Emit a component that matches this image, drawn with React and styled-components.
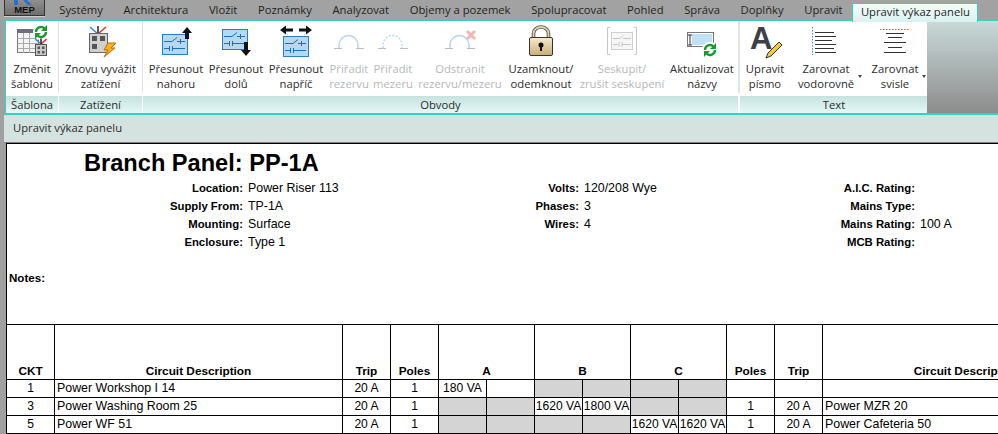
import React from 'react'
import styled, { createGlobalStyle } from 'styled-components'

const uiFont = `'Open Sans', 'Noto Sans', sans-serif`
const docFont = `'Liberation Sans', Arial, sans-serif`

const GlobalStyle = createGlobalStyle`
  html, body {
    margin: 0;
    padding: 0;
    background: #a0a0a0;
  }
`
const Page = styled.div`
  width: 998px;
  height: 434px;
  overflow: hidden;
  display: flex;
  flex-direction: column;
  background: #a0a0a0;
  font-family: ${uiFont};
  font-size: 11.25px;
  color: #2b2b2b;
`
const TabBar = styled.div`
  height: 20px;
  display: flex;
  flex: none;
  align-items: stretch;
  padding-left: 4px;
  background: #a2a2a2;
  position: relative;
  z-index: 1;
`
const AppButton = styled.div`
  width: 41px;
  height: 16px;
  margin-right: 4px;
  position: relative;
  box-sizing: border-box;
  border: 1px solid #333;
  border-top: none;
  background: linear-gradient(#8f8f8f, #6f6f6f);
  color: #111;
  font-family: ${docFont};
  font-weight: bold;
  font-size: 9.5px;
  line-height: 10px;
  padding-top: 5px;
  text-align: center;
  box-shadow: 0 1px 0 #d0d0d0;
`
const LogoMark = styled.svg`
  position: absolute;
  left: 6px;
  top: 0;
`
const Tab = styled.div`
  padding: 0 10.3px;
  line-height: 20px;
  white-space: nowrap;
  color: #1f1f1f;
`
const ActiveTab = styled(Tab)`
  box-sizing: border-box;
  width: 126px;
  height: 19px;
  margin: 3px 0 0 -1px;
  padding: 0 8px;
  line-height: 15px;
  border: 1px solid #35d0c0;
  border-bottom: none;
  background: linear-gradient(#f4fbfa, #d9f3f0);
`
const Ribbon = styled.div`
  height: 95px;
  flex: none;
  display: flex;
  box-sizing: border-box;
  margin-left: 5px;
  border-top: 1px solid #35d0c0;
  border-bottom: 2px solid #35d0c0;
  border-left: 1px solid #35d0c0;
  background: linear-gradient(#dfe5e5 78%, #fff 78%);
`
const Group = styled.div`
  width: ${props => props.$w}px;
  margin-right: ${props => props.$gap ?? 1}px;
  display: flex;
  flex-direction: column;
  flex: none;
  background: #fff;
`
const GroupBody = styled.div`
  flex: 1;
  display: flex;
  padding-left: ${props => props.$inset ?? 0}px;
`
const GroupName = styled.div`
  height: 17px;
  line-height: 17px;
  text-align: center;
  background: linear-gradient(#c6e2df, #e4f9f7);
  color: #2b2b2b;
`
const Filler = styled.div`
  flex: 1;
  margin-left: -1px;
  background: linear-gradient(#cad9d9, #8c8c8c);
`
const ToolButton = styled.div`
  width: ${props => props.$w}px;
  flex: none;
  position: relative;
  padding-top: 3px;
  display: flex;
  flex-direction: column;
  align-items: center;
  color: ${props => (props.$off ? '#b5b8b8' : '#2b2b2b')};
`
const IconSlot = styled.svg`
  width: 40px;
  height: 36px;
  flex: none;
  overflow: visible;
`
const ToolLabel = styled.div`
  margin-top: 1px;
  line-height: 15px;
  text-align: center;
  white-space: nowrap;
`
const Caret = styled.span`
  position: absolute;
  right: ${props => props.$right}px;
  top: 54px;
  border: 2.5px solid transparent;
  border-top: 3px solid #444;
`
const ContextBar = styled.div`
  height: 28px;
  flex: none;
  margin-left: 4px;
  padding-left: 9px;
  line-height: 26px;
  background: #d5e3e0;
  border-bottom: 1px solid #7c7c7c;
  box-sizing: border-box;
`
const Sheet = styled.div`
  flex: 1;
  margin-left: 6px;
  background: #fff;
  border-top: 1px solid #000;
  border-left: 1px solid #000;
  overflow: hidden;
  font-family: ${docFont};
  font-size: 12.3px;
  color: #000;
`
const SheetTitle = styled.h1`
  margin: 0 0 2px;
  padding: 5px 0 0 77px;
  font-size: 23.6px;
  line-height: 28px;
  font-weight: bold;
`
const InfoGrid = styled.div`
  display: grid;
  grid-template-columns: 236px 126px 200px 126px 200px 1fr;
  grid-auto-rows: 18px;
  column-gap: 5px;
  line-height: 18px;
`
const InfoLabel = styled.div`
  font-weight: bold;
  font-size: 11.35px;
  text-align: right;
`
const InfoValue = styled.div`
  white-space: nowrap;
  font-size: 12.4px;
`
const Notes = styled.div`
  font-weight: bold;
  font-size: 11.6px;
  padding-left: 2px;
  margin-top: 18px;
  height: 55px;
  line-height: 18px;
`
const Schedule = styled.table`
  table-layout: fixed;
  width: 1104px;
  border-spacing: 0;
  border-top: 1px solid #000;
`
const HeadCell = styled.th`
  height: 53px;
  padding: 0 0 1px;
  vertical-align: bottom;
  font-size: 11.8px;
  line-height: 14px;
  border-right: 1px solid #000;
  border-bottom: 1px solid #000;
`
const Cell = styled.td`
  height: 17px;
  padding: 0 ${props => (props.$left ? '0 0 2px' : '0')};
  text-align: ${props => (props.$left ? 'left' : 'center')};
  font-size: 12.1px;
  line-height: 17px;
  white-space: nowrap;
  overflow: hidden;
  background: ${props => (props.$shade ? '#d4d4d4' : '#fff')};
  border-right: 1px solid #000;
  border-bottom: 1px solid #000;
`
const DescCell = styled(Cell)`
  font-size: 12.4px;
`

const Refresh = ({ cx, cy }) => (
  <g fill="none" stroke="#1d9a2c" strokeWidth="2.4">
    <path d={`M${cx - 5} ${cy}a5 5 0 0 1 8.500-3.500`} />
    <path d={`M${cx + 5} ${cy}a5 5 0 0 1-8.500 3.500`} />
    <path d={`M${cx + 6} ${cy - 7}v6h-6z`} fill="#1d9a2c" stroke="none" />
    <path d={`M${cx - 6} ${cy + 7}v-6h6z`} fill="#1d9a2c" stroke="none" />
  </g>
)

const Wires = ({ x, y, s = 1 }) => (
  <g strokeWidth="1.6" fill="none">
    <path d={`M${x - 8 * s} ${y - 7 * s}L${x} ${y}`} stroke="#2f8fe0" />
    <path d={`M${x + 8 * s} ${y - 7 * s}L${x} ${y}`} stroke="#e0342c" />
    <path d={`M${x} ${y - 8 * s}V${y}`} stroke="#333" />
  </g>
)

const Cells = ({ x, y, w, h }) => (
  <g>
    <rect x={x} y={y} width={w} height={h} fill="#c9c9c9" stroke="#555" />
    <rect x={x + 2} y={y + 2} width={w / 2 - 3} height={h / 2 - 3} fill="#555" />
    <rect x={x + w / 2 + 1} y={y + 2} width={w / 2 - 3} height={h / 2 - 3} fill="#555" />
    <rect x={x + 2} y={y + h / 2 + 1} width={w / 2 - 3} height={h / 2 - 3} fill="#555" />
    <rect x={x + w / 2 + 1} y={y + h / 2 + 1} width={w / 2 - 3} height={h / 2 - 3} fill="#555" />
  </g>
)

const TemplateIcon = () => (
  <IconSlot viewBox="0 0 40 36">
    <rect x="5.5" y="5.5" width="21" height="23" fill="#f4f4f4" stroke="#777" />
    <rect x="5" y="5" width="22" height="4" fill="#6b7078" />
    <path d="M5.5 14.5h21M5.5 19.5h21M5.5 24.5h21M11.5 9v20M17.5 9v20" stroke="#aaa" />
    <circle cx="29" cy="8" r="8" fill="#fff" />
    <Refresh cx={29} cy={8} />
    <Wires x={29} y={20} s={0.7} />
    <Cells x={23.5} y={20.5} w={11} h={11} />
  </IconSlot>
)

const BalanceIcon = () => (
  <IconSlot viewBox="0 0 40 36">
    <Wires x={17} y={10} />
    <rect x="8.5" y="9.5" width="18" height="19" fill="#d0d0d0" stroke="#666" />
    <rect x="11" y="12" width="5" height="5" fill="#555" />
    <rect x="19" y="12" width="5" height="5" fill="#555" />
    <rect x="11" y="20" width="5" height="5" fill="#555" />
    <path d="M27 19l8 0-5 5h4l-11 9 4-7h-4z" fill="#f6b21c" stroke="#c66a10" strokeWidth="1" />
  </IconSlot>
)

const CircuitPanel = ({ x, y, w = 25, h = 20 }) => (
  <g>
    <rect x={x + 0.5} y={y + 0.5} width={w} height={h} fill="#b6d8f2" stroke="#2a7cc6" />
    <g stroke="#1f6fb8" fill="none">
      <path d={`M${x + 2} ${y + 7.5}h8l5-4M${x + 15} ${y + 7.5}h8M${x + 18.5} ${y + 5}v5`} />
      <path d={`M${x + 2} ${y + 14.5}h5M${x + 7.5} ${y + 12}v5M${x + 10.5} ${y + 12}v5M${x + 11} ${y + 14.5}h12`} />
    </g>
  </g>
)

const MoveUpIcon = () => (
  <IconSlot viewBox="0 0 40 36">
    <CircuitPanel x={6} y={10} />
    <path d="M31 3l5 6h-3v6h-4V9h-3z" fill="#111" />
  </IconSlot>
)

const MoveDownIcon = () => (
  <IconSlot viewBox="0 0 40 36">
    <CircuitPanel x={6} y={5} />
    <path d="M30 32l-5-6h3v-8h4v8h3z" fill="#111" />
  </IconSlot>
)

const MoveAcrossIcon = () => (
  <IconSlot viewBox="0 0 40 36">
    <CircuitPanel x={7} y={12} />
    <path d="M4 6l6-4.500v3h7v3h-7v3zM36 6l-6-4.500v3h-7v3h7v3z" fill="#111" />
  </IconSlot>
)

const ArcIcon = ({ dashed, cross }) => (
  <IconSlot viewBox="0 0 40 36">
    <path d="M5 24.500h8M27 24.500h8" stroke="#bdbdbd" fill="none" />
    <path
      d="M10 24v-3a9.500 9.500 0 0 1 19 0v3"
      stroke="#b9d4ee"
      strokeWidth="1.4"
      strokeDasharray={dashed ? '2 1.500' : undefined}
      fill="none"
    />
    {cross && <path d="M27 7l8 8M35 7l-8 8" stroke="#f2b4b4" strokeWidth="3" />}
  </IconSlot>
)

const LockIcon = () => (
  <IconSlot viewBox="0 0 40 36">
    <path d="M12.500 14V9.500a7.500 6.500 0 0 1 15 0V14" fill="none" stroke="#555" strokeWidth="3.600" />
    <path d="M12.500 14V9.500a7.500 6.500 0 0 1 15 0V14" fill="none" stroke="#e4d3a6" strokeWidth="1.800" />
    <defs>
      <linearGradient id="lockBody" x1="0" y1="0" x2="0" y2="1">
        <stop offset="0" stopColor="#f8eccd" />
        <stop offset="1" stopColor="#c9ad76" />
      </linearGradient>
    </defs>
    <rect x="8.500" y="13.500" width="23" height="18" rx="1.500" fill="url(#lockBody)" stroke="#333" />
    <circle cx="20" cy="21" r="2.500" fill="#111" />
    <rect x="19" y="21" width="2" height="6" fill="#111" />
  </IconSlot>
)

const GroupIcon = () => (
  <IconSlot viewBox="0 0 40 36">
    <path d="M8 3.500H5.500v27H8M32 3.500h2.500v27H32" fill="none" stroke="#c6c6c6" />
    <rect x="9.500" y="8.500" width="21" height="17" fill="#f6f6f6" stroke="#cfcfcf" />
    <path d="M11 14.500h7l3-3M21 14.500h8M11 20.500h5M17 18v5M20 18v5M20 20.500h9" stroke="#c6c6c6" fill="none" />
  </IconSlot>
)

const RenameIcon = () => (
  <IconSlot viewBox="0 0 40 36">
    <rect x="5.500" y="8.500" width="26" height="14" fill="#fff" stroke="#777" />
    <rect x="10" y="10" width="20" height="11" fill="#bfe0f7" />
    <path d="M6 11h4M6 21h4M8 11v10" stroke="#333" fill="none" />
    <circle cx="28" cy="26" r="8" fill="#fff" />
    <Refresh cx={28} cy={26} />
  </IconSlot>
)

const FontIcon = () => (
  <IconSlot viewBox="0 0 40 36">
    <text x="5" y="25" fontFamily={docFont} fontWeight="bold" fontSize="31" fill="#3a4048">A</text>
    <path d="M34 18l3 3-11 11-5 2 2-5z" fill="#f6c93c" stroke="#333" />
  </IconSlot>
)

const AlignHIcon = () => (
  <IconSlot viewBox="0 0 40 36">
    <path d="M6.500 3v28" stroke="#2f8fe0" strokeDasharray="1.500 1.500" />
    <path d="M9 8.500h19M9 12.500h21M9 16.500h17M9 20.500h21M9 24.500h19M9 28.500h21" stroke="#333" />
  </IconSlot>
)

const AlignVIcon = () => (
  <IconSlot viewBox="0 0 40 36">
    <path d="M5 5.500h29" stroke="#2f8fe0" strokeDasharray="1.500 1.500" />
    <path d="M11 9.500h18M13 13.500h14M9 18.500h22M13 23.500h14M9 28.500h22" stroke="#333" />
  </IconSlot>
)

const tabs = ['Systémy', 'Architektura', 'Vložit', 'Poznámky', 'Analyzovat', 'Objemy a pozemek', 'Spolupracovat', 'Pohled', 'Správa', 'Doplňky', 'Upravit']

const Tool = ({ w, off, icon, lines, caret }) => (
  <ToolButton $w={w} $off={off}>
    {icon}
    <ToolLabel>
      {lines[0]}
      <br />
      {lines[1]}
    </ToolLabel>
    {caret !== undefined && <Caret $right={caret} />}
  </ToolButton>
)

const infoRows = [
  ['Location:', 'Power Riser 113', 'Volts:', '120/208 Wye', 'A.I.C. Rating:', ''],
  ['Supply From:', 'TP-1A', 'Phases:', '3', 'Mains Type:', ''],
  ['Mounting:', 'Surface', 'Wires:', '4', 'Mains Rating:', '100 A'],
  ['Enclosure:', 'Type 1', '', '', 'MCB Rating:', ''],
]

const loadRows = [
  { ckt: '1', desc: 'Power Workshop I 14', trip: '20 A', poles: '1', loads: ['180 VA', '', null, null, null, null], rPoles: '', rTrip: '', rDesc: '' },
  { ckt: '3', desc: 'Power Washing Room 25', trip: '20 A', poles: '1', loads: [null, null, '1620 VA', '1800 VA', null, null], rPoles: '1', rTrip: '20 A', rDesc: 'Power MZR 20' },
  { ckt: '5', desc: 'Power WF 51', trip: '20 A', poles: '1', loads: [null, null, null, null, '1620 VA', '1620 VA'], rPoles: '1', rTrip: '20 A', rDesc: 'Power Cafeteria 50' },
]

const App = () => (
  <Page>
    <GlobalStyle />
    <TabBar>
      <AppButton>
        <LogoMark width="22" height="5" viewBox="0 0 22 5">
          <path d="M3 0h4v5H3zM12 0l5 5h4l-5-5z" fill="#2a6fd0" />
        </LogoMark>
        MEP
      </AppButton>
      {tabs.map(t => (
        <Tab key={t}>{t}</Tab>
      ))}
      <ActiveTab>Upravit výkaz panelu</ActiveTab>
    </TabBar>
    <Ribbon>
      <Group $w={52}>
        <GroupBody>
          <Tool w={52} icon={<TemplateIcon />} lines={['Změnit', 'šablonu']} />
        </GroupBody>
        <GroupName>Šablona</GroupName>
      </Group>
      <Group $w={83}>
        <GroupBody>
          <Tool w={83} icon={<BalanceIcon />} lines={['Znovu vyvážit', 'zatížení']} />
        </GroupBody>
        <GroupName>Zatížení</GroupName>
      </Group>
      <Group $w={595} $gap={2}>
        <GroupBody $inset={3}>
          <Tool w={60} icon={<MoveUpIcon />} lines={['Přesunout', 'nahoru']} />
          <Tool w={60} icon={<MoveDownIcon />} lines={['Přesunout', 'dolů']} />
          <Tool w={60} icon={<MoveAcrossIcon />} lines={['Přesunout', 'napříč']} />
          <Tool w={46} off icon={<ArcIcon />} lines={['Přiřadit', 'rezervu']} />
          <Tool w={42} off icon={<ArcIcon dashed />} lines={['Přiřadit', 'mezeru']} />
          <Tool w={92} off icon={<ArcIcon cross />} lines={['Odstranit', 'rezervu/mezeru']} />
          <Tool w={70} icon={<LockIcon />} lines={['Uzamknout/', 'odemknout']} />
          <Tool w={92} off icon={<GroupIcon />} lines={['Seskupit/', 'zrušit seskupení']} />
          <Tool w={68} icon={<RenameIcon />} lines={['Aktualizovat', 'názvy']} />
        </GroupBody>
        <GroupName>Obvody</GroupName>
      </Group>
      <Group $w={188} $gap={0}>
        <GroupBody>
          <Tool w={50} icon={<FontIcon />} lines={['Upravit', 'písmo']} />
          <Tool w={72} icon={<AlignHIcon />} lines={['Zarovnat', 'vodorovně']} caret={0} />
          <Tool w={66} icon={<AlignVIcon />} lines={['Zarovnat', 'svisle']} caret={2} />
        </GroupBody>
        <GroupName>Text</GroupName>
      </Group>
      <Filler />
    </Ribbon>
    <ContextBar>Upravit výkaz panelu</ContextBar>
    <Sheet>
      <SheetTitle>Branch Panel: PP-1A</SheetTitle>
      <InfoGrid>
        {infoRows.map(row =>
          row.map((text, i) =>
            i % 2 === 0 ? (
              <InfoLabel key={`${row[0]}-${i}`}>{text}</InfoLabel>
            ) : (
              <InfoValue key={`${row[0]}-${i}`}>{text}</InfoValue>
            )
          )
        )}
      </InfoGrid>
      <Notes>Notes:</Notes>
      <Schedule>
        <colgroup>
          <col width="48" />
          <col width="288" />
          {Array.from({ length: 8 }, (_, i) => (
            <col key={i} width="48" />
          ))}
          <col width="48" />
          <col width="48" />
          <col width="288" />
        </colgroup>
        <thead>
          <tr>
            <HeadCell>CKT</HeadCell>
            <HeadCell>Circuit Description</HeadCell>
            <HeadCell>Trip</HeadCell>
            <HeadCell>Poles</HeadCell>
            <HeadCell colSpan={2}>A</HeadCell>
            <HeadCell colSpan={2}>B</HeadCell>
            <HeadCell colSpan={2}>C</HeadCell>
            <HeadCell>Poles</HeadCell>
            <HeadCell>Trip</HeadCell>
            <HeadCell>Circuit Description</HeadCell>
          </tr>
        </thead>
        <tbody>
          {loadRows.map(r => (
            <tr key={r.ckt}>
              <Cell>{r.ckt}</Cell>
              <DescCell $left>{r.desc}</DescCell>
              <Cell>{r.trip}</Cell>
              <Cell>{r.poles}</Cell>
              {r.loads.map((v, i) => (
                <Cell key={i} $shade={v === null}>{v}</Cell>
              ))}
              <Cell>{r.rPoles}</Cell>
              <Cell>{r.rTrip}</Cell>
              <DescCell $left>{r.rDesc}</DescCell>
            </tr>
          ))}
        </tbody>
      </Schedule>
    </Sheet>
  </Page>
)

export default App
